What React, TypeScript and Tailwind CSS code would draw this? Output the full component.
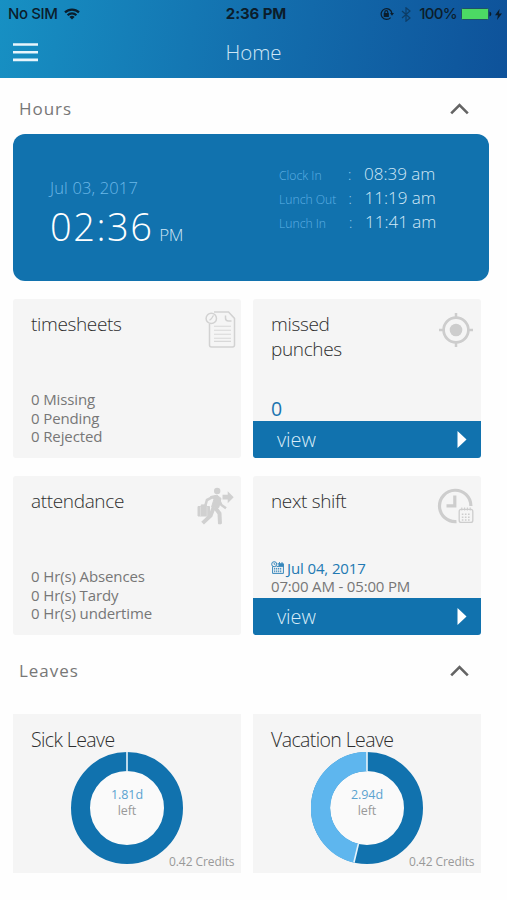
import type { ReactNode } from "react";

const timesheets = ["0 Missing", "0 Pending", "0 Rejected"];
const attendance = ["0 Hr(s) Absences", "0 Hr(s) Tardy", "0 Hr(s) undertime"];

const punches = [
  { label: "Clock In", time: "08:39 am", colon: "ml-0" },
  { label: "Lunch Out", time: "11:19 am", colon: "ml-[0.5px]" },
  { label: "Lunch In", time: "11:41 am", colon: "ml-px" },
];

function StatusBar() {
  return (
    <div className="grid h-[28px] grid-cols-[1fr_auto_1fr] items-center pl-2 pr-[5px] font-[Inter] text-[#0b1d2c]">
      <div className="flex items-center gap-[7px]">
        <span className="text-[15px] font-medium tracking-[-0.4px]">No SIM</span>
        <svg width="16" height="12" viewBox="0 0 16 12" fill="none" stroke="currentColor" strokeWidth="2.2">
          <path d="M1 4.4a10 10 0 0 1 14 0" />
          <path d="M3.6 7.2a6.2 6.2 0 0 1 8.8 0" />
          <path d="M8 11.6 5.4 9a3.7 3.7 0 0 1 5.2 0z" fill="currentColor" stroke="none" />
        </svg>
      </div>
      <span className="ml-0.5 text-[15px] font-bold tracking-[-0.1px]">2:36 PM</span>
      <div className="flex items-center justify-end">
        <svg width="14" height="14" viewBox="0 0 14 14" fill="none" stroke="currentColor" strokeWidth="1.2">
          <path d="M10.6 10.6A5.4 5.4 0 1 1 11.9 6.3" />
          <path d="M10 6h4l-2 2.7z" fill="currentColor" stroke="none" />
          <rect x="3.7" y="6.1" width="5.2" height="4" rx="0.5" fill="currentColor" stroke="none" />
          <path d="M4.8 6.4V5.2a1.5 1.5 0 0 1 3 0v1.2" />
        </svg>
        <svg className="ml-[7px] opacity-50" width="10" height="15" viewBox="0 0 10 15" fill="none" stroke="currentColor" strokeWidth="1.2">
          <path d="m1 4 8 7-4 3.2V.8L9 4l-8 7" />
        </svg>
        <span className="ml-2 text-[15px] font-medium tracking-[-0.7px]">100%</span>
        <svg className="ml-1" width="31" height="12" viewBox="0 0 31 12">
          <rect x="0.5" y="0.5" width="27" height="11" rx="1" fill="#4cd964" stroke="#1e5168" />
          <path d="M28.5 3.5a2.6 2.6 0 0 1 0 5z" fill="#0b1d2c" />
        </svg>
        <svg className="ml-[3px]" width="7" height="11" viewBox="0 0 7 11" fill="currentColor">
          <path d="M4.6 0 0 6.2h2.9L2 11l5-6.4H4z" />
        </svg>
      </div>
    </div>
  );
}

function SectionHeading({ title, className }: { title: string; className: string }) {
  return (
    <div className={`flex items-center justify-between pl-[19px] pr-[38px] ${className}`}>
      <h2 className="text-[17px] leading-6 tracking-[0.95px] text-[#777]">{title}</h2>
      <svg width="19" height="12" viewBox="0 0 19 12" fill="none" stroke="#646464" strokeWidth="2.6">
        <path d="m1.2 10.4 8.3-8.2 8.3 8.2" />
      </svg>
    </div>
  );
}

function Card({ title, icon, children }: { title: ReactNode; icon: ReactNode; children: ReactNode }) {
  return (
    <div className="flex h-[159px] w-[228px] flex-col overflow-hidden rounded-[3px] bg-[#f5f5f5]">
      <div className="flex justify-between pl-[18px] pt-[13px]">
        <h3 className="text-[19px] font-light leading-[24.5px] tracking-[-0.35px] text-[#2e2e2e]">{title}</h3>
        {icon}
      </div>
      {children}
    </div>
  );
}

function StatList({ items }: { items: string[] }) {
  return (
    <ul className="mt-auto pb-[12.5px] pl-[18px] text-[15px] leading-[18.4px] tracking-[-0.12px] text-[#777]">
      {items.map((item) => (
        <li key={item}>{item}</li>
      ))}
    </ul>
  );
}

function ViewButton() {
  return (
    <button className="flex h-[37px] w-full shrink-0 items-center justify-between bg-[#1172ae] pl-6 pr-[14px]">
      <span className="text-[20px] font-light leading-6 tracking-[-0.1px] text-[#d9ecf8]">view</span>
      <svg width="10" height="17" viewBox="0 0 10 17" fill="#fff">
        <path d="m.5 0 9 8.5-9 8.5z" />
      </svg>
    </button>
  );
}

function TimesheetIcon() {
  return (
    <svg className="mr-[5px] -mt-0.5" width="31" height="39" viewBox="0 0 31 39" fill="none" stroke="#d2d2d2" strokeWidth="1.5">
      <path d="M9 2h14.5l6 6.4V35a2 2 0 0 1-2 2h-21a2 2 0 0 1-2-2V14" />
      <path d="M20.5 5.5V8q0 3 3 3h3" />
      <circle cx="6.3" cy="8.4" r="5.2" />
      <path d="m8.5 5.4-2.2 3.4-1.8 1.4" strokeWidth="1.2" />
      <path d="M9 16.2h17M9 20.2h17M9 24.2h17M9 28.2h17M9 31.4h17" stroke="#d8d8d8" strokeWidth="1.1" />
    </svg>
  );
}

function TargetIcon() {
  return (
    <svg className="mr-2 mt-px" width="34" height="34" viewBox="0 0 34 34" fill="none" stroke="#cdcdcd">
      <circle cx="17" cy="17" r="12.4" strokeWidth="2.7" />
      <circle cx="17" cy="17" r="6.3" fill="#cdcdcd" stroke="none" />
      <path d="M17 0v6M17 28v6M0 17h6M28 17h6" strokeWidth="2.5" />
    </svg>
  );
}

function LeavingIcon() {
  return (
    <svg className="mr-[7px] -mt-0.5" width="37" height="38" viewBox="0 0 37 38" fill="none" stroke="#d0d0d0">
      <circle cx="20.2" cy="4" r="3.2" fill="#d0d0d0" stroke="none" />
      <path d="M13.5 9.5 20 8.2l4 3.2-2.2 9.1-7.2-.7 2.4-7.6z" fill="#d0d0d0" strokeWidth="1" />
      <path d="m16 9.8-6 3.2-1.8 6M22 13l2.4 5 4.6 3.2" strokeWidth="2.6" />
      <path d="m16.8 20-3.2 8.7-8 7.4M18 20.3l4.5 6.2.5 10.3" strokeWidth="4" />
      <path d="M21.5 35.8H24" strokeWidth="3" />
      <path d="M1 19.5h11.5V29H1zM4.2 19.5v-1.6h5v1.6" fill="#d0d0d0" strokeWidth="1" />
      <path d="M3.5 19.5V29M10 19.5V29" stroke="#dedede" strokeWidth="0.8" />
      <path d="M25.5 7.8h5.2V4.2l6 6-6 6v-3.8h-5.2z" fill="#d0d0d0" stroke="none" />
    </svg>
  );
}

function ShiftIcon() {
  return (
    <svg className="mr-[7px] -mt-px" width="37" height="36" viewBox="0 0 37 36" fill="none" stroke="#cdcdcd">
      <path d="M19.5 33.6A15.7 15.7 0 1 1 33.9 18" strokeWidth="3.2" />
      <path d="M17.8 7.5v10.3H9.5" strokeWidth="3.2" />
      <rect x="22.2" y="21.4" width="13.6" height="13" rx="2" strokeWidth="1.3" />
      <path d="M24.8 19.5v3M27.6 19.5v3M30.4 19.5v3M33.2 19.5v3" strokeWidth="1.1" />
      <path d="M24.8 26.3h9M24.8 29.2h9M24.8 32h9" strokeWidth="1.5" strokeDasharray="1.6 1.5" />
    </svg>
  );
}

function CalendarIcon() {
  return (
    <svg width="13" height="13" viewBox="0 0 13 13" fill="none" stroke="#3787bb" strokeWidth="1">
      <path d="M1.6 5.5v6.9h10.8V2.8H6.5M5.5 5.4h7" />
      <path d="M7.5 3.9h5" strokeWidth="2.2" />
      <circle cx="3.2" cy="3.2" r="2.5" />
      <path d="M3.2 1.8v1.5h1.2M8.5 1v2M11 1v2" strokeWidth="0.9" />
      <path d="M3 7.4h8M3 9h8M3 10.7h8" strokeDasharray="1.3 .7" />
    </svg>
  );
}

interface LeaveCardProps {
  title: string;
  left: string;
  credits: string;
  used: number;
}

function LeaveCard({ title, left, credits, used }: LeaveCardProps) {
  const angle = used * 2 * Math.PI;
  const x = Math.sin(angle);
  const y = -Math.cos(angle);

  return (
    <div className="h-[159px] w-[228px] bg-[#f5f5f5] pt-[13px]">
      <h3 className="pl-[18px] text-[19.5px] font-light leading-[25px] tracking-[-0.6px] text-[#2e2e2e]">{title}</h3>
      <div className="relative mx-auto size-[112px]">
        <svg width="112" height="112" viewBox="-56 -56 112 112" fill="none">
          <circle r="38" fill="#fafafa" />
          <circle r="46.5" stroke="#1172ae" strokeWidth="19" />
          {used < 1 && (
            <path d={`M${46.5 * x} ${46.5 * y}A46.5 46.5 0 0 1 0 -46.5`} stroke="#5eb6ee" strokeWidth="19.4" />
          )}
          <path d={`M0 -37V-56M${37 * x} ${37 * y}L${56 * x} ${56 * y}`} stroke="#e6f3fb" strokeWidth="1.6" />
        </svg>
        <div className="absolute inset-x-0 top-[35px] text-center text-[12.5px] leading-4 tracking-[-0.1px]">
          <p className="text-[#5ba3d0]">{left}</p>
          <p className="text-[#999]">left</p>
        </div>
        <p className="absolute left-[98px] top-[102px] whitespace-nowrap text-[12px] leading-4 tracking-[-0.08px] text-[#999]">
          {credits} Credits
        </p>
      </div>
    </div>
  );
}

export default function App() {
  return (
    <div className="h-[900px] w-[507px] overflow-hidden bg-[#fefefe] font-['Open_Sans',sans-serif]">
      <header className="h-[78px] bg-linear-[100deg] from-[#1790c3] via-[#136fae] to-[#0e529a]">
        <StatusBar />
        <div className="grid h-12 grid-cols-[1fr_auto_1fr] items-center px-[13px]">
          <svg width="25" height="19" viewBox="0 0 25 19" stroke="#e8f5fc" strokeWidth="2.6">
            <path d="M0 1.5h25M0 9.2h25M0 16.9h25" />
          </svg>
          <h1 className="text-[20.5px] font-light text-[#cfe6f5]">Home</h1>
        </div>
      </header>

      <SectionHeading title="Hours" className="h-14 pt-[6px]" />

      <section className="ml-[13px] flex h-[147px] w-[476px] rounded-xl bg-[#1172ae] pl-[37px]">
        <div className="w-[229px] pt-[42px]">
          <p className="text-[16.5px] font-light leading-6 tracking-[0.15px] text-[#6cb8e8]">Jul 03, 2017</p>
          <div className="flex items-baseline gap-1.5 leading-[52px] text-white">
            <span className="text-[38px] font-light tracking-[1.5px]">02:36</span>
            <span className="text-[17px] font-light tracking-[-0.4px] text-[#cfe6f5]">PM</span>
          </div>
        </div>
        <div className="pt-[27.6px]">
          {punches.map((punch) => (
            <div key={punch.label} className="flex h-[24.4px] items-baseline font-light leading-[24.4px]">
              <span className="w-[69px] text-[12.2px] text-[#5eb0e4]">{punch.label}</span>
              <span className={`w-4 text-[14px] text-[#9fd0ef] ${punch.colon}`}>:</span>
              <span className="text-[17px] text-[#d3e9f7]">{punch.time}</span>
            </div>
          ))}
        </div>
      </section>

      <section className="ml-[13px] mt-[18px] grid grid-cols-[228px_228px] gap-x-3 gap-y-[18px]">
        <Card title="timesheets" icon={<TimesheetIcon />}>
          <StatList items={timesheets} />
        </Card>
        <Card
          title={
            <>
              missed
              <br />
              punches
            </>
          }
          icon={<TargetIcon />}
        >
          <p className="mt-auto pl-[18px] text-[19.5px] leading-6 text-[#1b74b0]">0</p>
          <ViewButton />
        </Card>
        <Card title="attendance" icon={<LeavingIcon />}>
          <StatList items={attendance} />
        </Card>
        <Card title="next shift" icon={<ShiftIcon />}>
          <div className="mt-auto pb-[2.5px] pl-[18px] text-[15px] leading-[18.4px]">
            <p className="flex items-center gap-[3px] tracking-[-0.12px] text-[#2279b3]">
              <CalendarIcon />
              Jul 04, 2017
            </p>
            <p className="tracking-[-0.17px] text-[#777]">07:00 AM - 05:00 PM</p>
          </div>
          <ViewButton />
        </Card>
      </section>

      <SectionHeading title="Leaves" className="h-[79px] pb-[7px]" />

      <section className="ml-[13px] grid grid-cols-[228px_228px] gap-x-3">
        <LeaveCard title="Sick Leave" left="1.81d" credits="0.42" used={1} />
        <LeaveCard title="Vacation Leave" left="2.94d" credits="0.42" used={0.5375} />
      </section>
    </div>
  );
}
